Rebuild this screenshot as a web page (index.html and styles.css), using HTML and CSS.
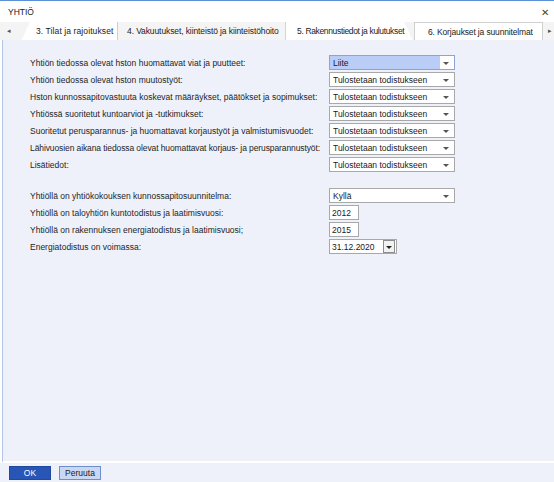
FILE: index.html
```html
<!DOCTYPE html>
<html lang="fi">
<head>
<meta charset="utf-8">
<link rel="stylesheet" href="styles.css">
</head>
<body>
<div class="window">
  <div class="titlebar">
    <span class="title">YHTIÖ</span>
    <span class="close">✕</span>
  </div>
  <div class="tabs">
    <span class="arrow">◂</span>
    <div class="tab first">3. Tilat ja rajoitukset</div>
    <div class="tab second">4. Vakuutukset, kiinteistö ja kiinteistöhoito</div>
    <div class="tab slant">5. Rakennustiedot ja kulutukset</div>
    <div class="tab active">6. Korjaukset ja suunnitelmat</div>
    <span class="arrow right">▸</span>
  </div>
  <div class="content">
    <div class="group">
      <div class="row"><label>Yhtiön tiedossa olevat hston huomattavat viat ja puutteet:</label><div class="select hl"><span>Liite</span><i class="caret"></i></div></div>
      <div class="row"><label>Yhtiön tiedossa olevat hston muutostyöt:</label><div class="select"><span>Tulostetaan todistukseen</span><i class="caret"></i></div></div>
      <div class="row"><label>Hston kunnossapitovastuuta koskevat määräykset, päätökset ja sopimukset:</label><div class="select"><span>Tulostetaan todistukseen</span><i class="caret"></i></div></div>
      <div class="row"><label>Yhtiössä suoritetut kuntoarviot ja -tutkimukset:</label><div class="select"><span>Tulostetaan todistukseen</span><i class="caret"></i></div></div>
      <div class="row"><label>Suoritetut perusparannus- ja huomattavat korjaustyöt ja valmistumisvuodet:</label><div class="select"><span>Tulostetaan todistukseen</span><i class="caret"></i></div></div>
      <div class="row"><label class="tight">Lähivuosien aikana tiedossa olevat huomattavat korjaus- ja perusparannustyöt:</label><div class="select"><span>Tulostetaan todistukseen</span><i class="caret"></i></div></div>
      <div class="row"><label>Lisätiedot:</label><div class="select"><span>Tulostetaan todistukseen</span><i class="caret"></i></div></div>
    </div>
    <div class="group second">
      <div class="row"><label>Yhtiöllä on yhtiökokouksen kunnossapitosuunnitelma:</label><div class="select"><span>Kyllä</span><i class="caret"></i></div></div>
      <div class="row"><label>Yhtiöllä on taloyhtiön kuntotodistus ja laatimisvuosi:</label><div class="input year">2012</div></div>
      <div class="row"><label>Yhtiöllä on rakennuksen energiatodistus ja laatimisvuosi;</label><div class="input year">2015</div></div>
      <div class="row"><label>Energiatodistus on voimassa:</label><div class="input date"><span>31.12.2020</span><span class="dbtn"><i class="caret"></i></span></div></div>
    </div>
  </div>
  <div class="footer">
    <button class="btn ok">OK</button>
    <button class="btn cancel">Peruuta</button>
  </div>
</div>
</body>
</html>
```

FILE: styles.css
```css
html, body {
  margin: 0;
  padding: 0;
  background: #ffffff;
}
body {
  font-family: "Liberation Sans", Arial, sans-serif;
  font-size: 8.5px;
  color: #1a1a1a;
}
.window {
  width: 554px;
  height: 482px;
  display: flex;
  flex-direction: column;
  border-top: 1px solid #5b8fd6;
  box-sizing: border-box;
  overflow: hidden;
}
.titlebar {
  height: 21px;
  display: flex;
  align-items: center;
  justify-content: space-between;
  padding: 1px 5px 0 8px;
  box-sizing: border-box;
  background: #ffffff;
  flex-shrink: 0;
}
.title { font-size: 8.5px; color: #222; }
.close { font-size: 10px; color: #444; }
.tabs {
  height: 18px;
  display: flex;
  align-items: stretch;
  background: #f4f4f4;
  flex-shrink: 0;
}
.arrow {
  width: 18px;
  display: flex;
  align-items: center;
  justify-content: center;
  font-size: 7px;
  color: #555;
  flex-shrink: 0;
}
.arrow.right { width: 14px; }
.tab {
  display: flex;
  align-items: center;
  color: #222;
  white-space: nowrap;
  box-sizing: border-box;
  flex-shrink: 0;
  overflow: hidden;
  border-right: 1px solid #d4d4d4;
}
.tab.first {
  width: 98px;
  padding-left: 16px;
  margin-left: 2px;
  letter-spacing: 0.1px;
  background: linear-gradient(115deg, #f4f4f4 0 9px, #ffffff 9px);
  border-right: 1px solid #cfcfcf;
}
.tab.second {
  width: 168px;
  padding-left: 9px;
  letter-spacing: -0.1px;
}
.tab.slant {
  width: 127px;
  padding-left: 11px;
  letter-spacing: -0.35px;
  border-right: none;
  background: linear-gradient(65deg, #ffffff 0 calc(100% - 8px), #f4f4f4 calc(100% - 8px));
}
.tab.active {
  width: 129px;
  background: #ffffff;
  border: 1px solid #d0d0d0;
  border-bottom: none;
  padding-left: 13px;
  margin-left: 1px;
  letter-spacing: -0.15px;
}
.content {
  flex: 1;
  background: #eef1f9;
  border-left: 1px solid #b3c6e8;
  margin-left: 2px;
  padding: 15px 0 0 27px;
  border-bottom: 2px solid #ffffff;
}
.group {
  display: flex;
  flex-direction: column;
  gap: 2px;
}
.group.second { margin-top: 16px; }
.row {
  display: flex;
  align-items: center;
  height: 15px;
}
.row label {
  width: 299px;
  white-space: nowrap;
  color: #1e1e1e;
  flex-shrink: 0;
}
.row label.tight { letter-spacing: -0.1px; }
.select {
  width: 126px;
  height: 15px;
  box-sizing: border-box;
  border: 1px solid #a8a8a8;
  background: #ffffff;
  display: flex;
  align-items: center;
  justify-content: space-between;
  padding: 0 5px 0 3px;
}
.select.hl {
  background: linear-gradient(to right, #b9cdf7 0 calc(100% - 14px), #ffffff calc(100% - 14px));
  border-color: #8aa4d6;
}
.caret {
  display: inline-block;
  width: 0;
  height: 0;
  border-left: 3px solid transparent;
  border-right: 3px solid transparent;
  border-top: 3px solid #555;
  margin-top: 1px;
}
.input {
  height: 15px;
  box-sizing: border-box;
  border: 1px solid #a8a8a8;
  background: #ffffff;
  display: flex;
  align-items: center;
  padding-left: 2px;
}
.year { width: 30px; }
.date {
  width: 68px;
  justify-content: space-between;
  padding-right: 1px;
}
.dbtn {
  width: 10px;
  height: 11px;
  border: 1px solid #8d8d8d;
  background: #f2f2f2;
  display: flex;
  align-items: center;
  justify-content: center;
}
.dbtn .caret { border-top-color: #222; }
.footer {
  height: 19px;
  flex-shrink: 0;
  background: #eef1f9;
  display: flex;
  align-items: center;
  gap: 8px;
  padding-left: 9px;
}
.btn {
  width: 42px;
  height: 14px;
  font-family: "Liberation Sans", Arial, sans-serif;
  font-size: 8.5px;
  padding: 0;
  box-sizing: border-box;
  margin: 0;
}
.btn.ok {
  background: #2855b6;
  color: #ffffff;
  border: 1px solid #1f4aa0;
}
.btn.cancel {
  background: #c9d7f3;
  color: #222;
  border: 1px solid #6e8fcf;
}
```
